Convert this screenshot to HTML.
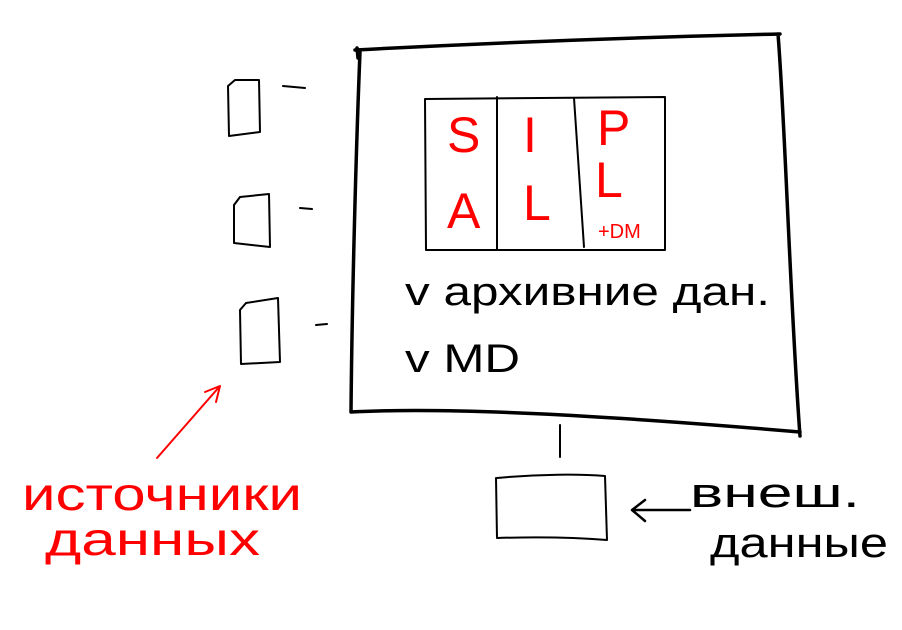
<!DOCTYPE html>
<html><head><meta charset="utf-8"><style>
html,body{margin:0;padding:0;background:#fff;}
svg{display:block}
text{font-family:"Liberation Sans",sans-serif;stroke:#fff;stroke-width:1.6px;paint-order:stroke;}
</style></head><body>
<svg width="902" height="630" viewBox="0 0 902 630" xmlns="http://www.w3.org/2000/svg">
<g fill="none" stroke="#000" stroke-linecap="round" stroke-linejoin="round">
  <path d="M357 48 L358 58 M355 50 C450 45 600 38 780 34 M778 34 C785 120 790 300 800 436 M351 412 C450 407 600 415 800 432 M360 52 C356 150 352 300 351 412" stroke-width="3.5"/>
  <path d="M425 99 L665 97 L665 250 L426 250 Z M497 97 L497 250 M574 98 L584 247" stroke-width="2"/>
  <path d="M235 80 L259 80 L260 132 L229 136 L228 86 Z" stroke-width="2"/>
  <path d="M240 197 L269 194 L270 247 L234 243 L234 205 Z" stroke-width="2"/>
  <path d="M246 303 L278 298 L280 362 L241 364 L240 310 Z" stroke-width="2"/>
  <path d="M283 86 L305 88 M300 208 L312 209 M316 325 L327 324" stroke-width="2"/>
  <path d="M560 425 L560 457" stroke-width="2"/>
  <path d="M497 478 C540 474 580 474 605 476 L607 540 C570 537 530 537 497 538 L496 478" stroke-width="2"/>
  <path d="M632 510 L690 510 M632 510 L645 500 M632 510 L645 521" stroke-width="2.5"/>
</g>
<path d="M157 458 L220 386 M220 386 L205 392 M220 386 L216 402" fill="none" stroke="#f00" stroke-width="2" stroke-linecap="round"/>
<g fill="#f00" font-size="50">
  <text x="447" y="152">S</text>
  <text x="447" y="228">A</text>
  <text x="523" y="152">I</text>
  <text x="523" y="220">L</text>
  <text x="597" y="145">P</text>
  <text x="595" y="197">L</text>
  <text x="598" y="238" font-size="20" style="stroke-width:0.6px">+DM</text>
</g>
<text x="22" y="510" font-size="46" fill="#f00" textLength="280" lengthAdjust="spacingAndGlyphs">источники</text>
<text x="45" y="555" font-size="46" fill="#f00" textLength="215" lengthAdjust="spacingAndGlyphs">данных</text>
<text x="405" y="305" font-size="40" fill="#000" textLength="365" lengthAdjust="spacingAndGlyphs">v архивние дан.</text>
<text x="405" y="372" font-size="40" fill="#000" textLength="115" lengthAdjust="spacingAndGlyphs">v MD</text>
<text x="690" y="507" font-size="42" fill="#000" textLength="170" lengthAdjust="spacingAndGlyphs">внеш.</text>
<text x="710" y="557" font-size="42" fill="#000" textLength="178" lengthAdjust="spacingAndGlyphs">данные</text>
</svg>
</body></html>
